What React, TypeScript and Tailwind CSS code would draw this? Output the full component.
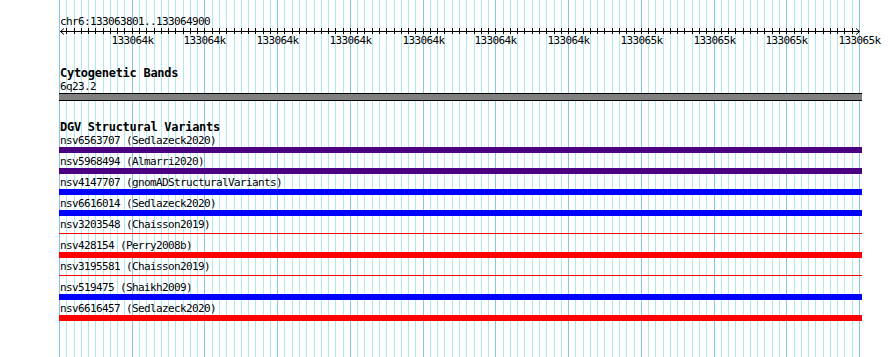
import React from "react";

const X0 = 59.5;
const STEP = 800 / 110;

const minorXs = Array.from({ length: 111 }, (_, i) => Math.floor(X0 + i * STEP) + 0.5);

const labels = [
  "133064k", "133064k", "133064k", "133064k", "133064k", "133064k", "133064k",
  "133065k", "133065k", "133065k", "133065k",
];

type Variant = { id: string; study: string; color: string; thin?: boolean };

const variants: Variant[] = [
  { id: "nsv6563707", study: "Sedlazeck2020", color: "bg-[#4b0082]" },
  { id: "nsv5968494", study: "Almarri2020", color: "bg-[#4b0082]" },
  { id: "nsv4147707", study: "gnomADStructuralVariants", color: "bg-[#0000ff]" },
  { id: "nsv6616014", study: "Sedlazeck2020", color: "bg-[#0000ff]" },
  { id: "nsv3203548", study: "Chaisson2019", color: "bg-[#ff0000]", thin: true },
  { id: "nsv428154", study: "Perry2008b", color: "bg-[#ff0000]" },
  { id: "nsv3195581", study: "Chaisson2019", color: "bg-[#ff0000]", thin: true },
  { id: "nsv519475", study: "Shaikh2009", color: "bg-[#0000ff]" },
  { id: "nsv6616457", study: "Sedlazeck2020", color: "bg-[#ff0000]" },
];

const mono = "font-['DejaVu_Sans_Mono','Liberation_Mono',monospace]";

function Grid() {
  return (
    <svg className="absolute inset-0" width={890} height={357}>
      {minorXs.map((x, i) => (
        <line
          key={i}
          x1={x}
          x2={x}
          y1={0}
          y2={357}
          stroke={i % 10 === 0 ? "#84c6e8" : "#aee9f0"}
          strokeWidth={1}
        />
      ))}
    </svg>
  );
}

function Ruler() {
  return (
    <div className="relative h-[19px]">
      <svg className="absolute left-0 top-0" width={803} height={8}>
        <line x1={1} x2={801} y1={3.5} y2={3.5} stroke="#000" />
        <polyline points="5,0.5 1.5,3.5 5,6.5" fill="none" stroke="#000" />
        <polyline points="797,0.5 800.5,3.5 797,6.5" fill="none" stroke="#000" />
        {minorXs.slice(1, 110).map((x, i) => (
          <line key={i} x1={x - 59} x2={x - 59} y1={0} y2={6} stroke="#000" />
        ))}
      </svg>
      {labels.map((l, k) => (
        <span
          key={k}
          className="absolute top-[6px] -translate-x-1/2 text-[11px] leading-[13px] tracking-[-0.62px] text-black"
          style={{ left: minorXs[(k + 1) * 10] - 59 }}
        >
          {l}
        </span>
      ))}
    </div>
  );
}

export default function App() {
  return (
    <div className={`relative h-[357px] w-[890px] overflow-hidden bg-white ${mono}`}>
      <Grid />
      <div className="relative ml-[59px] flex w-[803px] flex-col pt-[15px] text-black">
        {/* ruler */}
        <div className="pl-px text-[11px] leading-[13px] tracking-[-0.62px]">chr6:133063801..133064900</div>
        <Ruler />

        {/* cytogenetic bands */}
        <div className="mt-[20px] pl-px text-[12px] font-bold leading-[13px] tracking-[-0.27px]">Cytogenetic Bands</div>
        <div className="pl-px text-[11px] leading-[13px] tracking-[-0.62px]">6q23.2</div>
        <div className="h-[8px] border-y border-black bg-[#808080]" />

        {/* DGV */}
        <div className="mt-[20px] pl-px text-[12px] font-bold leading-[13px] tracking-[-0.27px]">DGV Structural Variants</div>
        <div className="flex flex-col">
          {variants.map((v) => (
            <div key={v.id} className="flex h-[21px] flex-col">
              <div className="whitespace-pre pl-px text-[11px] leading-[13px] tracking-[-0.62px]">
                {v.id} ({v.study})
              </div>
              {v.thin ? (
                <div className={`mt-[2px] h-px ${v.color}`} />
              ) : (
                <div className={`h-[6px] ${v.color}`} />
              )}
            </div>
          ))}
        </div>
      </div>
    </div>
  );
}
